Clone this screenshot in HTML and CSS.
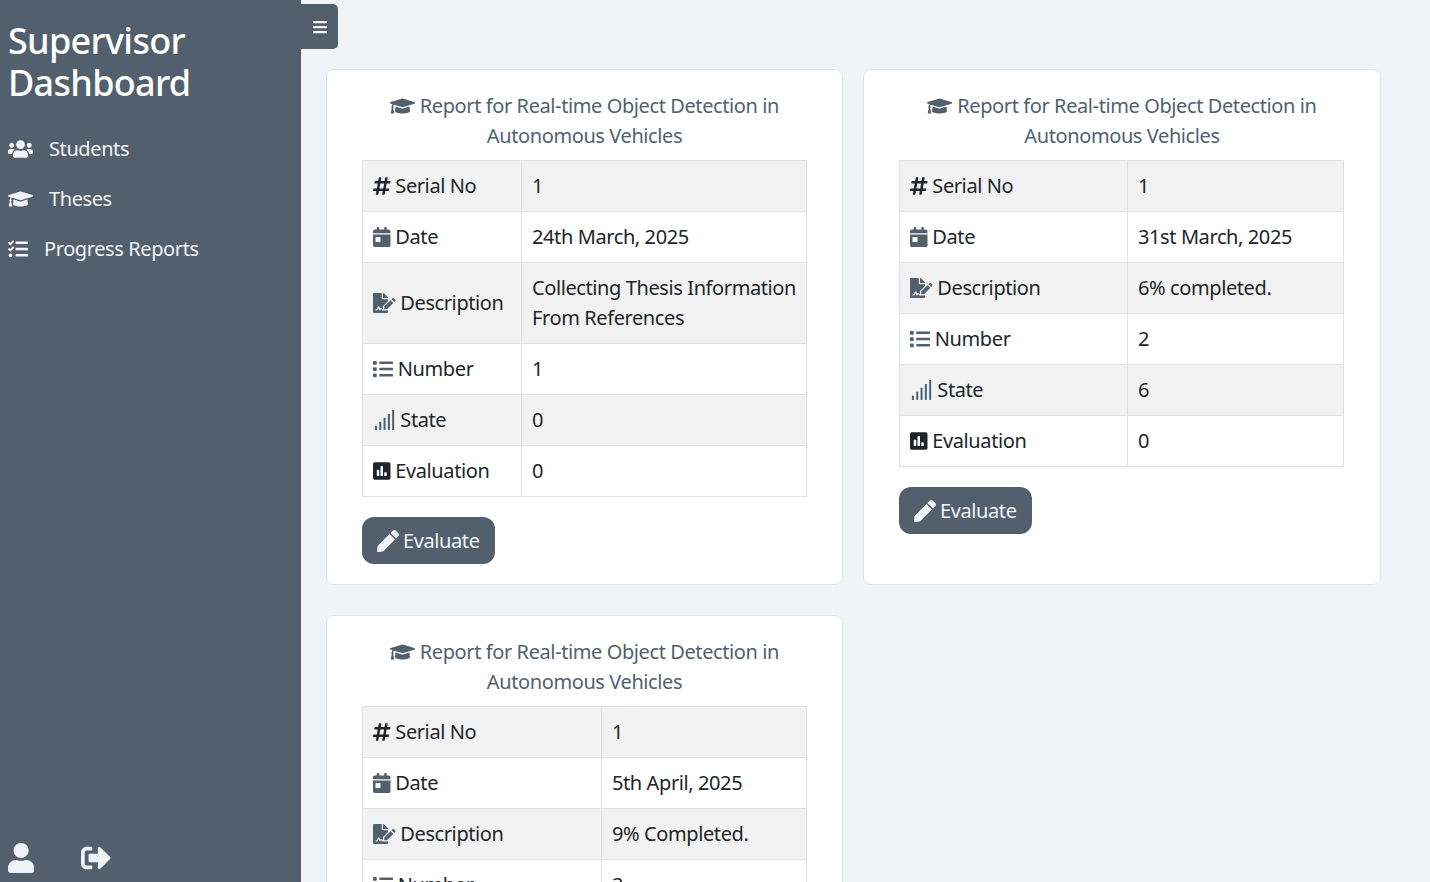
FILE: index.html
```html
<!DOCTYPE html>
<html lang="en">
<head>
    <meta charset="UTF-8">
    <meta name="viewport" content="width=device-width, initial-scale=1.0">
    <title>Supervisor Dashboard</title>
    <link rel="stylesheet" href="styles.css">
</head>
<body>

    <!-- Icon paths, reused below -->
    <svg class="icon-defs" aria-hidden="true">
        <defs>
            <path id="i-bars" d="M16 132h416c8.837 0 16-7.163 16-16V76c0-8.837-7.163-16-16-16H16C7.163 60 0 67.163 0 76v40c0 8.837 7.163 16 16 16zm0 160h416c8.837 0 16-7.163 16-16v-40c0-8.837-7.163-16-16-16H16c-8.837 0-16 7.163-16 16v40c0 8.837 7.163 16 16 16zm0 160h416c8.837 0 16-7.163 16-16v-40c0-8.837-7.163-16-16-16H16c-8.837 0-16 7.163-16 16v40c0 8.837 7.163 16 16 16z"/>
            <path id="i-users" d="M96 224c35.3 0 64-28.7 64-64s-28.7-64-64-64-64 28.7-64 64 28.7 64 64 64zm448 0c35.3 0 64-28.7 64-64s-28.7-64-64-64-64 28.7-64 64 28.7 64 64 64zm32 32h-64c-17.6 0-33.5 7.1-45.1 18.6 40.3 22.1 68.9 62 75.1 109.4h66c17.7 0 32-14.3 32-32v-32c0-35.3-28.7-64-64-64zm-256 0c61.9 0 112-50.1 112-112S381.9 32 320 32 208 82.1 208 144s50.1 112 112 112zm76.8 32h-8.3c-20.8 10-43.9 16-68.5 16s-47.6-6-68.5-16h-8.3C179.6 288 128 339.6 128 403.2V432c0 26.5 21.5 48 48 48h288c26.5 0 48-21.5 48-48v-28.8c0-63.6-51.6-115.2-115.2-115.2zm-223.7-13.4C161.5 263.1 145.6 256 128 256H64c-35.3 0-64 28.7-64 64v32c0 17.7 14.3 32 32 32h65.9c6.3-47.4 34.9-87.3 75.2-109.4z"/>
            <path id="i-cap" d="M622.34 153.2L343.4 67.5c-15.2-4.67-31.6-4.67-46.79 0L17.66 153.2c-23.54 7.23-23.54 38.36 0 45.59l48.63 14.94c-10.67 13.19-17.23 29.28-17.88 46.9C38.78 266.15 32 276.11 32 288c0 10.78 5.68 19.85 13.86 25.65L20.33 428.53C18.11 438.52 25.71 448 35.94 448h56.11c10.24 0 17.84-9.48 15.62-19.47L82.14 313.65C90.32 307.85 96 298.78 96 288c0-11.57-6.47-21.25-15.66-26.87.76-15.02 8.44-28.3 20.69-36.72L296.6 284.5c9.06 2.78 26.44 6.25 46.79 0l278.95-85.7c23.55-7.24 23.55-38.36 0-45.6zM352.79 315.09c-28.53 8.76-52.84 3.92-65.59 0l-145.02-44.55L128 384c0 35.35 85.96 64 192 64s192-28.65 192-64l-14.18-113.47-145.03 44.56z"/>
            <path id="i-tasks" d="M139.61 35.5a12 12 0 0 0-17 0L58.93 98.81l-22.7-22.12a12 12 0 0 0-17 0L3.53 92.41a12 12 0 0 0 0 17l47.59 47.4a12.78 12.78 0 0 0 17.61 0l15.59-15.62L156.52 69a12.09 12.09 0 0 0 .09-17zm0 159.19a12 12 0 0 0-17 0l-63.68 63.72-22.7-22.1a12 12 0 0 0-17 0L3.53 252a12 12 0 0 0 0 17L51 316.5a12.77 12.77 0 0 0 17.6 0l15.7-15.69 72.2-72.22a12 12 0 0 0 .09-16.9zM64 368c-26.49 0-48.59 21.5-48.59 48S37.53 464 64 464a48 48 0 0 0 0-96zm432 16H208a16 16 0 0 0-16 16v32a16 16 0 0 0 16 16h288a16 16 0 0 0 16-16v-32a16 16 0 0 0-16-16zm0-320H208a16 16 0 0 0-16 16v32a16 16 0 0 0 16 16h288a16 16 0 0 0 16-16V80a16 16 0 0 0-16-16zm0 160H208a16 16 0 0 0-16 16v32a16 16 0 0 0 16 16h288a16 16 0 0 0 16-16v-32a16 16 0 0 0-16-16z"/>
            <path id="i-user" d="M224 256c70.7 0 128-57.3 128-128S294.7 0 224 0 96 57.3 96 128s57.3 128 128 128zm89.6 32h-16.7c-22.2 10.2-46.9 16-72.9 16s-50.6-5.8-72.9-16h-16.7C60.2 288 0 348.2 0 422.4V464c0 26.5 21.5 48 48 48h352c26.5 0 48-21.5 48-48v-41.6c0-74.2-60.2-134.4-134.4-134.4z"/>
            <path id="i-logout" d="M497 273L329 441c-15 15-41 4.5-41-17v-96H152c-13.3 0-24-10.7-24-24v-96c0-13.3 10.7-24 24-24h136V88c0-21.4 25.9-32 41-17l168 168c9.3 9.4 9.3 24.6 0 34zM192 436v-40c0-6.6-5.4-12-12-12H96c-17.7 0-32-14.3-32-32V160c0-17.7 14.3-32 32-32h84c6.6 0 12-5.4 12-12V76c0-6.6-5.4-12-12-12H96c-53 0-96 43-96 96v192c0 53 43 96 96 96h84c6.6 0 12-5.4 12-12z"/>
            <path id="i-hash" d="M440.667 182.109l7.143-40c1.313-7.355-4.342-14.109-11.813-14.109h-74.81l14.623-81.891C377.123 38.754 371.468 32 363.997 32h-40.632a12 12 0 0 0-11.813 9.891L296.175 128H197.54l14.623-81.891C213.477 38.754 207.822 32 200.35 32h-40.632a12 12 0 0 0-11.813 9.891L132.528 128H53.432a12 12 0 0 0-11.813 9.891l-7.143 40C33.163 185.246 38.818 192 46.289 192h74.81L98.242 320H19.146a12 12 0 0 0-11.813 9.891l-7.143 40C-1.123 377.246 4.532 384 12.003 384h74.81L72.19 465.891C70.877 473.246 76.532 480 84.003 480h40.632a12 12 0 0 0 11.813-9.891L151.826 384h98.634l-14.623 81.891C234.523 473.246 240.178 480 247.65 480h40.632a12 12 0 0 0 11.813-9.891L315.472 384h79.096a12 12 0 0 0 11.813-9.891l7.143-40c1.313-7.355-4.342-14.109-11.813-14.109h-74.81l22.857-128h79.096a12 12 0 0 0 11.813-9.891zM261.889 320h-98.634l22.857-128h98.634l-22.857 128z"/>
            <path id="i-calendar" d="M0 464c0 26.5 21.5 48 48 48h352c26.5 0 48-21.5 48-48V192H0v272zm64-192c0-8.8 7.2-16 16-16h96c8.8 0 16 7.2 16 16v96c0 8.8-7.2 16-16 16H80c-8.8 0-16-7.2-16-16v-96zM400 64h-48V16c0-8.8-7.2-16-16-16h-32c-8.8 0-16 7.2-16 16v48H160V16c0-8.8-7.2-16-16-16h-32c-8.8 0-16 7.2-16 16v48H48C21.5 64 0 85.5 0 112v48h448v-48c0-26.5-21.5-48-48-48z"/>
            <path id="i-sign" d="M218.17 424.14c-2.95-5.92-8.09-6.52-10.17-6.52s-7.22.59-10.02 6.19l-7.67 15.34c-6.37 12.78-25.03 11.37-29.48-2.09L144 386.59l-10.61 31.88c-5.89 17.66-22.38 29.53-41 29.53H80c-8.84 0-16-7.16-16-16s7.16-16 16-16h12.39c4.83 0 9.11-3.08 10.64-7.66l18.19-54.64c3.3-9.81 12.44-16.41 22.78-16.41s19.48 6.59 22.77 16.41l13.88 41.64c19.75-16.19 54.06-9.7 66 14.16 1.89 3.78 5.49 5.95 9.36 6.26v-82.12l128-127.09V160H248c-13.2 0-24-10.8-24-24V0H24C10.7 0 0 10.7 0 24v464c0 13.3 10.7 24 24 24h336c13.3 0 24-10.7 24-24v-40l-128-.11c-16.12-.31-30.58-9.28-37.83-23.75zM384 121.9c0-6.3-2.5-12.4-7-16.9L279.1 7c-4.5-4.5-10.6-7-17-7H256v128h128v-6.1zm-96 225.06V416h68.99l161.68-162.78-67.88-67.88L288 346.96zm280.54-179.63l-31.87-31.87c-9.94-9.94-26.07-9.94-36.01 0l-27.25 27.25 67.88 67.88 27.25-27.25c9.95-9.94 9.95-26.07 0-36.01z"/>
            <path id="i-list" d="M80 368H16a16 16 0 0 0-16 16v64a16 16 0 0 0 16 16h64a16 16 0 0 0 16-16v-64a16 16 0 0 0-16-16zm0-320H16A16 16 0 0 0 0 64v64a16 16 0 0 0 16 16h64a16 16 0 0 0 16-16V64a16 16 0 0 0-16-16zm0 160H16a16 16 0 0 0-16 16v64a16 16 0 0 0 16 16h64a16 16 0 0 0 16-16v-64a16 16 0 0 0-16-16zm416 176H176a16 16 0 0 0-16 16v32a16 16 0 0 0 16 16h320a16 16 0 0 0 16-16v-32a16 16 0 0 0-16-16zm0-320H176a16 16 0 0 0-16 16v32a16 16 0 0 0 16 16h320a16 16 0 0 0 16-16V80a16 16 0 0 0-16-16zm0 160H176a16 16 0 0 0-16 16v32a16 16 0 0 0 16 16h320a16 16 0 0 0 16-16v-32a16 16 0 0 0-16-16z"/>
            <path id="i-signal" d="M60 400h32c6 0 10 4 10 10v92c0 6-4 10-10 10H60c-6 0-10-4-10-10v-92c0-6 4-10 10-10zm110-100h32c6 0 10 4 10 10v192c0 6-4 10-10 10h-32c-6 0-10-4-10-10V310c0-6 4-10 10-10zm110-100h32c6 0 10 4 10 10v292c0 6-4 10-10 10h-32c-6 0-10-4-10-10V210c0-6 4-10 10-10zm110-100h32c6 0 10 4 10 10v392c0 6-4 10-10 10h-32c-6 0-10-4-10-10V110c0-6 4-10 10-10zM500 0h32c6 0 10 4 10 10v492c0 6-4 10-10 10h-32c-6 0-10-4-10-10V10c0-6 4-10 10-10z"/>
            <path id="i-poll" d="M400 32H48C21.5 32 0 53.5 0 80v352c0 26.5 21.5 48 48 48h352c26.5 0 48-21.5 48-48V80c0-26.5-21.5-48-48-48zM160 368c0 8.84-7.16 16-16 16h-32c-8.84 0-16-7.16-16-16V240c0-8.84 7.16-16 16-16h32c8.84 0 16 7.16 16 16v128zm96 0c0 8.84-7.16 16-16 16h-32c-8.84 0-16-7.16-16-16V144c0-8.84 7.16-16 16-16h32c8.84 0 16 7.16 16 16v224zm96 0c0 8.84-7.16 16-16 16h-32c-8.84 0-16-7.16-16-16v-64c0-8.84 7.16-16 16-16h32c8.84 0 16 7.16 16 16v64z"/>
            <path id="i-pen" d="M290.74 93.24l128.02 128.02-277.99 277.99-114.14 12.6C11.35 513.54-1.56 500.62.14 485.34l12.7-114.22 277.9-278.88zm207.2-19.06l-60.11-60.11c-18.75-18.75-49.16-18.75-67.91 0l-56.55 56.55 128.02 128.02 56.55-56.55c18.75-18.76 18.75-49.16 0-67.91z"/>
        </defs>
    </svg>

    <!-- Sidebar -->
    <div class="sidebar">
        <h2 class="brand">Supervisor Dashboard</h2>
        <a href="#" class="menu-item"><svg class="icon" viewBox="0 0 640 512"><use href="#i-users"/></svg>Students</a>
        <a href="#" class="menu-item"><svg class="icon" viewBox="0 0 640 512"><use href="#i-cap"/></svg>Theses</a>
        <a href="#" class="menu-item"><svg class="icon" viewBox="0 0 512 512"><use href="#i-tasks"/></svg>Progress Reports</a>
        <div class="sidebar-footer">
            <a href="#"><svg class="icon-lg" viewBox="0 0 448 512"><use href="#i-user"/></svg></a>
            <a href="#"><svg class="icon-lg" viewBox="0 0 512 512"><use href="#i-logout"/></svg></a>
        </div>
    </div>

    <!-- Main Content -->
    <div class="content">
        <button class="toggle"><svg class="icon-sm" viewBox="0 0 448 512"><use href="#i-bars"/></svg></button>

        <div class="report-grid">

            <div class="card">
                <h5 class="card-title"><svg class="icon" viewBox="0 0 640 512"><use href="#i-cap"/></svg> Report for Real-time Object Detection in Autonomous Vehicles</h5>
                <table class="report-table col-a">
                    <tr><th><svg class="icon dark" viewBox="0 0 448 512"><use href="#i-hash"/></svg> Serial No</th><td>1</td></tr>
                    <tr><th><svg class="icon" viewBox="0 0 448 512"><use href="#i-calendar"/></svg> Date</th><td>24th March, 2025</td></tr>
                    <tr><th><svg class="icon" viewBox="0 0 576 512"><use href="#i-sign"/></svg> Description</th><td>Collecting Thesis Information From References</td></tr>
                    <tr><th><svg class="icon" viewBox="0 0 512 512"><use href="#i-list"/></svg> Number</th><td>1</td></tr>
                    <tr><th><svg class="icon" viewBox="0 0 576 512"><use href="#i-signal"/></svg> State</th><td>0</td></tr>
                    <tr><th><svg class="icon dark" viewBox="0 0 448 512"><use href="#i-poll"/></svg> Evaluation</th><td>0</td></tr>
                </table>
                <button class="btn-evaluate"><svg class="icon" viewBox="0 0 512 512"><use href="#i-pen"/></svg>Evaluate</button>
            </div>

            <div class="card">
                <h5 class="card-title"><svg class="icon" viewBox="0 0 640 512"><use href="#i-cap"/></svg> Report for Real-time Object Detection in Autonomous Vehicles</h5>
                <table class="report-table col-b">
                    <tr><th><svg class="icon dark" viewBox="0 0 448 512"><use href="#i-hash"/></svg> Serial No</th><td>1</td></tr>
                    <tr><th><svg class="icon" viewBox="0 0 448 512"><use href="#i-calendar"/></svg> Date</th><td>31st March, 2025</td></tr>
                    <tr><th><svg class="icon" viewBox="0 0 576 512"><use href="#i-sign"/></svg> Description</th><td>6% completed.</td></tr>
                    <tr><th><svg class="icon" viewBox="0 0 512 512"><use href="#i-list"/></svg> Number</th><td>2</td></tr>
                    <tr><th><svg class="icon" viewBox="0 0 576 512"><use href="#i-signal"/></svg> State</th><td>6</td></tr>
                    <tr><th><svg class="icon dark" viewBox="0 0 448 512"><use href="#i-poll"/></svg> Evaluation</th><td>0</td></tr>
                </table>
                <button class="btn-evaluate"><svg class="icon" viewBox="0 0 512 512"><use href="#i-pen"/></svg>Evaluate</button>
            </div>

            <div class="card">
                <h5 class="card-title"><svg class="icon" viewBox="0 0 640 512"><use href="#i-cap"/></svg> Report for Real-time Object Detection in Autonomous Vehicles</h5>
                <table class="report-table col-c">
                    <tr><th><svg class="icon dark" viewBox="0 0 448 512"><use href="#i-hash"/></svg> Serial No</th><td>1</td></tr>
                    <tr><th><svg class="icon" viewBox="0 0 448 512"><use href="#i-calendar"/></svg> Date</th><td>5th April, 2025</td></tr>
                    <tr><th><svg class="icon" viewBox="0 0 576 512"><use href="#i-sign"/></svg> Description</th><td>9% Completed.</td></tr>
                    <tr><th><svg class="icon" viewBox="0 0 512 512"><use href="#i-list"/></svg> Number</th><td>3</td></tr>
                    <tr><th><svg class="icon" viewBox="0 0 576 512"><use href="#i-signal"/></svg> State</th><td>9</td></tr>
                    <tr><th><svg class="icon dark" viewBox="0 0 448 512"><use href="#i-poll"/></svg> Evaluation</th><td>0</td></tr>
                </table>
                <button class="btn-evaluate"><svg class="icon" viewBox="0 0 512 512"><use href="#i-pen"/></svg>Evaluate</button>
            </div>

        </div>
    </div>

</body>
</html>
```

FILE: styles.css
```css
html, body {
    height: 100%;
}

body {
    font-family: 'Noto Sans', 'Open Sans', sans-serif;
    font-size: 20px;
    line-height: 30px;
    letter-spacing: -0.4px;
    margin: 0;
    background-color: #F0F4F8;
    color: #212529;
    display: flex;
    overflow: hidden;
}

.icon-defs {
    display: none;
}

.icon {
    height: 20px;
    width: auto;
    fill: currentColor;
    vertical-align: -3px;
}

.icon.dark {
    color: #212529;
}

.icon-sm {
    height: 16px;
    width: auto;
    fill: currentColor;
    display: block;
}

.icon-lg {
    height: 30px;
    width: auto;
    fill: currentColor;
    display: block;
}

/* Sidebar */
.sidebar {
    width: 301px;
    flex-shrink: 0;
    height: 100%;
    box-sizing: border-box;
    background: #52606D;
    color: #F0F4F8;
    padding: 20px 8px 9px;
    display: flex;
    flex-direction: column;
}

.brand {
    margin: 0 0 20px;
    font-size: 36px;
    line-height: 42px;
    font-weight: 500;
    letter-spacing: -0.7px;
    color: white;
}

.menu-item {
    height: 50px;
    display: flex;
    align-items: center;
    gap: 16px;
    color: #F0F4F8;
    text-decoration: none;
}

.sidebar-footer {
    margin-top: auto;
    display: flex;
    gap: 47px;
}

.sidebar-footer a {
    color: #F0F4F8;
}

/* Main Content */
.content {
    flex: 1;
    min-width: 0;
    padding: 4px 49px 0 0;
}

.toggle {
    display: block;
    width: 37px;
    height: 45px;
    padding: 0;
    border: none;
    border-radius: 0 5px 5px 0;
    background: #52606D;
    color: #F0F4F8;
    cursor: pointer;
}

.toggle svg {
    margin: 0 auto;
    height: 16px;
}

.report-grid {
    display: grid;
    grid-template-columns: 517px 518px;
    column-gap: 20px;
    row-gap: 30px;
    margin: 20px 0 0 25px;
}

.card {
    background: white;
    border: 1px solid #E0E4E8;
    border-radius: 8px;
    padding: 21px 35px 20px;
    box-sizing: border-box;
}

.card-title {
    margin: 0 0 9px;
    font-size: 20px;
    font-weight: 400;
    line-height: 30px;
    text-align: center;
    color: #52606D;
    padding: 0 10px;
}

.report-table {
    width: 445px;
    table-layout: fixed;
    border-collapse: collapse;
    margin-bottom: 20px;
    color: #212529;
}

.report-table th,
.report-table td {
    border: 1px solid #DEE2E6;
    padding: 10px;
    font-weight: 400;
    text-align: left;
}

.report-table tr:nth-child(odd) {
    background: #F2F2F2;
}

.report-table th .icon {
    color: #52606D;
}

.report-table th .icon.dark {
    color: #212529;
}

.col-a th { width: 138px; }
.col-b th { width: 207px; }
.col-c th { width: 218px; }

.btn-evaluate {
    display: inline-flex;
    align-items: center;
    gap: 4px;
    height: 47px;
    padding: 0 15px;
    border: none;
    border-radius: 12px;
    background: #52606D;
    color: #F0F4F8;
    font: inherit;
    letter-spacing: inherit;
    cursor: pointer;
}

.btn-evaluate .icon {
    height: 22px;
}
```
